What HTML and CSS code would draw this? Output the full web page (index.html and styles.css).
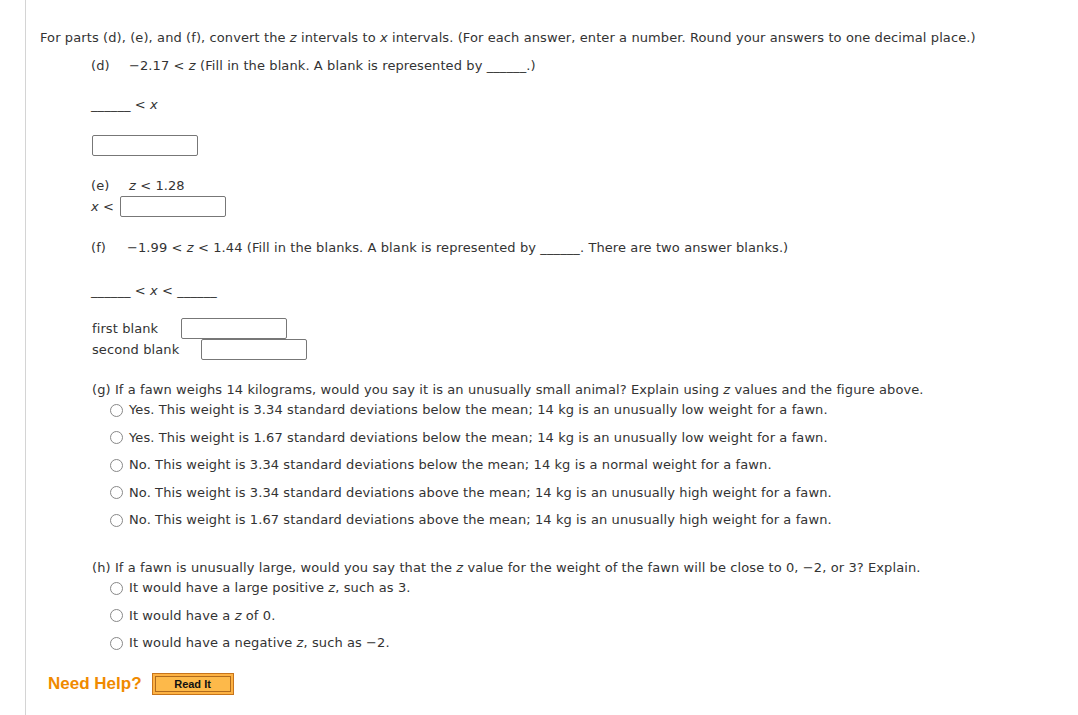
FILE: index.html
```html
<!DOCTYPE html>
<html>
<head>
<meta charset="utf-8">
<link rel="stylesheet" href="styles.css">
</head>
<body>
<div class="page">
  <p class="intro">For parts (d), (e), and (f), convert the <i>z</i> intervals to <i>x</i> intervals. (For each answer, enter a number. Round your answers to one decimal place.)</p>

  <div class="part">
    <p class="q-d"><span class="lbl">(d)</span>−2.17 &lt; <i>z</i> (Fill in the blank. A blank is represented by ______.)</p>
    <p class="blankline">______ &lt; <i>x</i></p>
    <div class="row-input"><span class="box"></span></div>

    <p class="q-e"><span class="lbl">(e)</span><i>z</i> &lt; 1.28</p>
    <div class="row-x"><span class="pre"><i>x</i> &lt;</span><span class="box"></span></div>

    <p class="q-f"><span class="lbl lbl-f">(f)</span>−1.99 &lt; <i>z</i> &lt; 1.44 (Fill in the blanks. A blank is represented by ______. There are two answer blanks.)</p>
    <p class="blankline2">______ &lt; <i>x</i> &lt; ______</p>
    <div class="blank-rows">
      <div class="brow"><span class="blab">first blank</span><span class="box"></span></div>
      <div class="brow"><span class="blab blab2">second blank</span><span class="box"></span></div>
    </div>
  </div>

  <div class="mc mc-g">
    <p class="mcq">(g) If a fawn weighs 14 kilograms, would you say it is an unusually small animal? Explain using <i>z</i> values and the figure above.</p>
    <ul class="opts">
      <li><span class="radio"></span><span class="otext">Yes. This weight is 3.34 standard deviations below the mean; 14 kg is an unusually low weight for a fawn.</span></li>
      <li><span class="radio"></span><span class="otext">Yes. This weight is 1.67 standard deviations below the mean; 14 kg is an unusually low weight for a fawn.</span></li>
      <li><span class="radio"></span><span class="otext">No. This weight is 3.34 standard deviations below the mean; 14 kg is a normal weight for a fawn.</span></li>
      <li><span class="radio"></span><span class="otext">No. This weight is 3.34 standard deviations above the mean; 14 kg is an unusually high weight for a fawn.</span></li>
      <li><span class="radio"></span><span class="otext">No. This weight is 1.67 standard deviations above the mean; 14 kg is an unusually high weight for a fawn.</span></li>
    </ul>
  </div>

  <div class="mc mc-h">
    <p class="mcq">(h) If a fawn is unusually large, would you say that the <i>z</i> value for the weight of the fawn will be close to 0, −2, or 3? Explain.</p>
    <ul class="opts">
      <li><span class="radio"></span><span class="otext">It would have a large positive <i>z</i>, such as 3.</span></li>
      <li><span class="radio"></span><span class="otext">It would have a <i>z</i> of 0.</span></li>
      <li><span class="radio"></span><span class="otext">It would have a negative <i>z</i>, such as −2.</span></li>
    </ul>
  </div>

  <div class="help">
    <span class="need">Need Help?</span>
    <span class="readit"><span class="readit-in">Read It</span></span>
  </div>
</div>
</body>
</html>
```

FILE: styles.css
```css
html, body {
  margin: 0;
  padding: 0;
  background: #fff;
}
body {
  font-family: "DejaVu Sans", Verdana, sans-serif;
  font-size: 13px;
  letter-spacing: 0.1px;
  color: #333;
}
p { margin: 0; }
i { font-style: italic; }

.page {
  margin-left: 25px;
  border-left: 1px solid #d4d4d4;
  min-height: 715px;
  box-sizing: border-box;
  padding: 28px 0 0 14px;
}
.intro { line-height: 20px; }

.part { padding-left: 51px; }
.lbl { display: inline-block; width: 38px; }
.lbl-f { width: 36px; }
.q-d { line-height: 20px; margin-top: 8px; }
.blankline { line-height: 20px; margin-top: 19px; }
.row-input { margin-top: 20px; height: 21px; display: flex; padding-left: 1px; }
.box {
  display: inline-block;
  width: 104px;
  height: 19px;
  border: 1px solid #777;
  border-radius: 2px;
  background: #fff;
}
.q-e { line-height: 20px; margin-top: 20px; }
.row-x { display: flex; align-items: center; height: 21px; gap: 6px; }
.q-f { line-height: 20px; margin-top: 21px; }
.blankline2 { line-height: 20px; margin-top: 23px; }
.blank-rows { margin-top: 17px; padding-left: 1px; }
.brow { display: flex; align-items: center; height: 21px; }
.blab { width: 89px; }
.blab2 { width: 109px; }

.mc { padding-left: 52px; }
.mc-g { margin-top: 20px; }
.mc-h { margin-top: 28px; }
.mcq { line-height: 20px; }
.opts { list-style: none; margin: 0; padding: 0 0 0 18px; }
.opts li {
  display: flex;
  align-items: center;
  line-height: 20px;
  margin-top: 7.5px;
}
.opts li:first-child { margin-top: 0; }
.radio {
  width: 11px;
  height: 11px;
  border: 1px solid #888;
  border-radius: 50%;
  margin-right: 6px;
  flex: none;
}

.help {
  display: flex;
  align-items: center;
  margin-top: 20px;
  padding-left: 8px;
  gap: 10px;
}
.need {
  font-family: "Liberation Sans", Arial, sans-serif;
  font-weight: bold;
  font-size: 17px;
  letter-spacing: 0;
  color: #f08a00;
}
.readit {
  display: inline-block;
  border: 1px solid #c8741a;
  background: #fdb243;
  padding: 2px;
}
.readit-in {
  display: block;
  width: 74px;
  height: 14px;
  border: 1px solid #b06a1c;
  background: #fdb94a;
  font-family: "Liberation Sans", Arial, sans-serif;
  font-weight: bold;
  font-size: 11px;
  letter-spacing: 0;
  line-height: 14px;
  color: #111;
  text-align: center;
}
```
